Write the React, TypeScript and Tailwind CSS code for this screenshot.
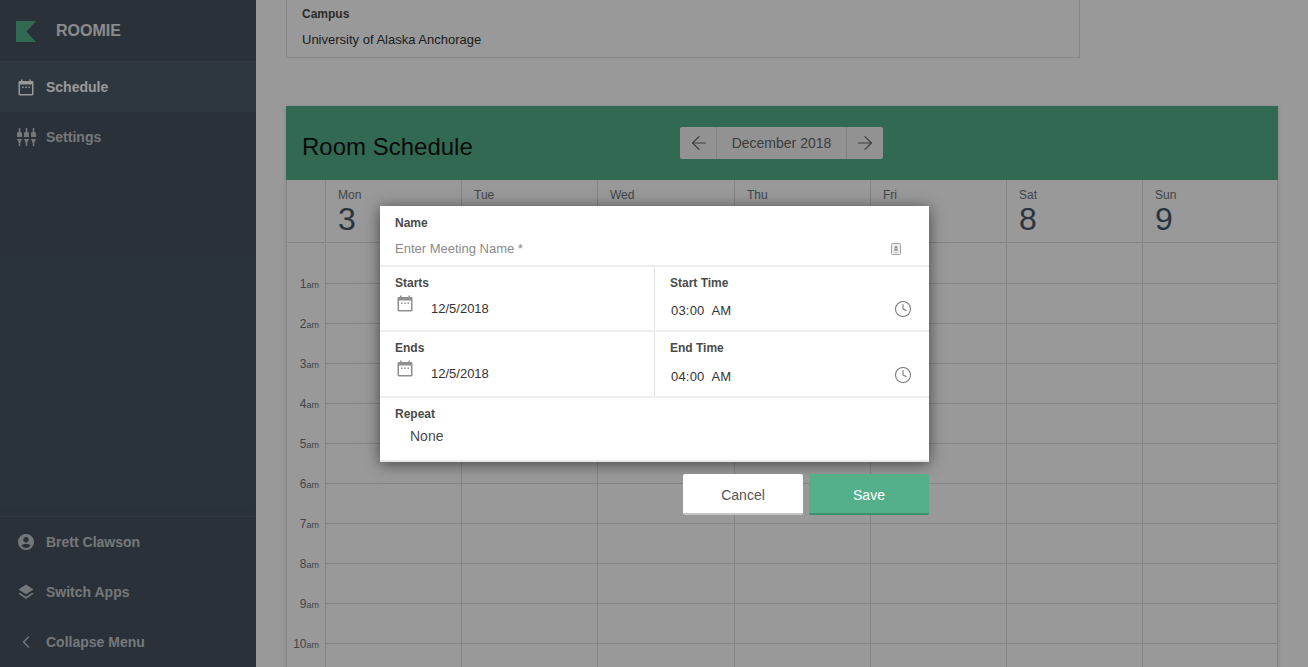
import { ArrowLeft, ArrowRight, ChevronLeft, Clock } from "lucide-react";

const font = { fontFamily: '"Liberation Sans", Arial, sans-serif' };
const days = [
  ["Mon", "3"], ["Tue", "4"], ["Wed", "5"], ["Thu", "6"], ["Fri", "7"], ["Sat", "8"], ["Sun", "9"],
];
const hours = ["1", "2", "3", "4", "5", "6", "7", "8", "9", "10", ""];

function CalIcon({ className }: { className: string }) {
  return (
    <svg viewBox="0 0 16 17" className={className} fill="none">
      <path d="M3 0.5h1.5V2h7V0.5H13V2h1.2c.7 0 1.3.6 1.3 1.3v12c0 .7-.6 1.2-1.3 1.2H1.8c-.7 0-1.3-.5-1.3-1.2v-12C.5 2.6 1.1 2 1.8 2H3z" fill="currentColor" />
      <rect x="2" y="5.5" width="12" height="9.5" fill="var(--cal-bg)" />
      <rect x="4" y="7.5" width="1.6" height="1.4" fill="currentColor" />
      <rect x="7.2" y="7.5" width="1.6" height="1.4" fill="currentColor" />
      <rect x="10.4" y="7.5" width="1.6" height="1.4" fill="currentColor" />
    </svg>
  );
}

function SlidersIcon() {
  return (
    <svg viewBox="0 0 19 18" className="w-[19px] h-[18px]" fill="currentColor">
      {[0, 7, 14].map((x) => (
        <g key={x}>
          <rect x={x + 1.7} y="0" width="1.6" height="5" />
          <path d={`M${x} 5.5c0-.8.6-1.4 1.4-1.4h2.2c.8 0 1.4.6 1.4 1.4V9H${x}z`} />
          <path d={`M${x} 11h5l-1.6 3.5h-1.8z`} />
          <rect x={x + 1.7} y="14" width="1.6" height="4" />
        </g>
      ))}
    </svg>
  );
}

function UserIcon() {
  return (
    <svg viewBox="0 0 16 16" className="w-4 h-4" fill="currentColor">
      <path fillRule="evenodd" d="M8 0a8 8 0 1 1 0 16A8 8 0 0 1 8 0zm0 3a2.7 2.7 0 1 0 0 5.4A2.7 2.7 0 0 0 8 3zm0 6.8c-2 0-3.8.8-4.6 2a5.8 5.8 0 0 0 9.2 0c-.8-1.2-2.6-2-4.6-2z" />
    </svg>
  );
}

function LayersIcon() {
  return (
    <svg viewBox="0 0 16 16" className="w-4 h-4" fill="currentColor">
      <path d="M8 .5l7.5 5L8 10.3.5 5.5z" />
      <path d="M1.8 8.8L8 12.8l6.2-4 1.3.9L8 15 .5 9.7z" />
    </svg>
  );
}

function NavRow({ label, icon, text, bg }: { label: string; icon: React.ReactNode; text: string; bg?: string }) {
  return (
    <div className={`h-[50px] flex items-center ${bg ?? ""}`}>
      <div className={`w-[46px] flex justify-center pl-[6px] ${text}`}>{icon}</div>
      <span className={`text-[14px] font-bold ${text}`}>{label}</span>
    </div>
  );
}

function Field({ label, children, className }: { label: string; children: React.ReactNode; className?: string }) {
  return (
    <div className={`px-[15px] pt-[9px] ${className ?? ""}`}>
      <div className="text-[12px] font-bold leading-[14px] text-[#4a4a4a]">{label}</div>
      {children}
    </div>
  );
}

function DateRow({ label }: { label: string }) {
  return (
    <Field label={label} className="flex-1 border-r border-[#e2e2e2]">
      <div className="flex items-start mt-[-1px]">
        <div className="w-[36px] pt-[6px] pl-[2px]">
          <div className="[--cal-bg:#ffffff] text-[#8f8f8f]">
            <CalIcon className="w-[16px] h-[17px]" />
          </div>
        </div>
        <span className="text-[13px] text-[#333] leading-[15px] pt-[12px]">12/5/2018</span>
      </div>
    </Field>
  );
}

function TimeRow({ label, time, pad }: { label: string; time: string; pad: string }) {
  return (
    <Field label={label} className="w-[274px]">
      <div className={`flex items-center justify-between pr-[2px] ${pad}`}>
        <span className="text-[13px] text-[#333] leading-[15px] pl-[1px] pt-[3px] tracking-[0.2px] whitespace-pre">{time}</span>
        <Clock className="w-[18px] h-[18px] text-[#777]" strokeWidth={1.4} />
      </div>
    </Field>
  );
}

export default function App() {
  return (
    <div style={font} className="relative h-[667px] w-full overflow-hidden bg-white flex">
      <aside className="w-[256px] h-[667px] shrink-0 bg-[#465360] flex flex-col">
        <div className="h-[62px] flex items-center border-b border-[#566370] pl-[16px]">
          <svg viewBox="0 0 20 21" className="w-5 h-[21px] mt-[1px]">
            <path d="M0 0h20l-9.6 10.5L20 21H0z" fill="#54b08a" />
          </svg>
          <span className="ml-[20px] text-[16px] font-bold text-[#e6e8ea]">ROOMIE</span>
        </div>
        <NavRow
          label="Schedule"
          text="text-white"
          bg="bg-[#4e5c6a]"
          icon={<div className="[--cal-bg:#4e5c6a]"><CalIcon className="w-[16px] h-[17px]" /></div>}
        />
        <NavRow label="Settings" text="text-[#c4c8cc]" icon={<SlidersIcon />} />
        <div className="flex-1" />
        <div className="border-t border-[#566370]">
          <NavRow label="Brett Clawson" text="text-[#c4c8cc]" icon={<UserIcon />} />
          <NavRow label="Switch Apps" text="text-[#c4c8cc]" icon={<LayersIcon />} />
          <NavRow label="Collapse Menu" text="text-[#c4c8cc]" icon={<ChevronLeft className="w-5 h-5" strokeWidth={1.6} />} />
        </div>
      </aside>

      <main className="flex-1 pl-[30px] pr-[30px]">
        <div className="w-[794px] h-[58px] border border-t-0 border-[#e0e0e0] pl-[15px] pt-[7px]">
          <div className="text-[12px] font-bold leading-[14px] text-[#4a4a4a]">Campus</div>
          <div className="text-[13px] leading-[15px] mt-[11px] text-[#333]">University of Alaska Anchorage</div>
        </div>

        <section className="mt-[48px] w-[992px] shadow-[0_1px_4px_rgba(0,0,0,0.15)]">
          <header className="h-[74px] bg-[#54b08a] flex pl-[16px]">
            <h1 className="w-[378px] text-[24px] leading-[29px] pt-[26px] text-[#111]">Room Schedule</h1>
            <div className="mt-[21px] h-[32px] w-[203px] flex rounded-[2px] bg-[#f4f4f4] text-[#666]">
              <div className="w-[37px] pl-[2px] flex items-center justify-center border-r border-[#d8d8d8]">
                <ArrowLeft className="w-[22px] h-[22px]" strokeWidth={1.3} />
              </div>
              <div className="flex-1 flex items-center justify-center text-[14px] text-[#666]">December 2018</div>
              <div className="w-[37px] flex items-center justify-center border-l border-[#d8d8d8]">
                <ArrowRight className="w-[22px] h-[22px]" strokeWidth={1.3} />
              </div>
            </div>
          </header>

          <div className="grid grid-cols-[40px_136px_136px_137px_136px_136px_136px_135px] bg-white">
            <div className="h-[63px] border-x border-b border-[#dcdcdc]" />
            {days.map(([d, n]) => (
              <div key={d} className="h-[63px] border-r border-b border-[#dcdcdc] pl-[12px] pt-[8px]">
                <div className="text-[12px] leading-[14px] text-[#6b7480]">{d}</div>
                <div className="text-[32px] leading-[33px] mt-[1px] text-[#46586a]">{n}</div>
              </div>
            ))}
            <div className="col-span-8 h-px" />
            {hours.map((h) => (
              <div key={h} className="contents">
                <div className="h-[40px] border-x border-[#dcdcdc] relative">
                  {h && (
                    <span className="absolute right-[6px] bottom-[-8px] leading-[14px] text-[#6b7480] text-[12px]">
                      {h}
                      <span className="text-[9px]">am</span>
                    </span>
                  )}
                </div>
                {days.map(([d]) => (
                  <div key={d} className="h-[40px] border-r border-b border-[#dcdcdc]" />
                ))}
              </div>
            ))}
          </div>
        </section>
      </main>

      <div className="absolute inset-0 bg-black/40" />

      <div className="absolute left-[380px] top-[206px] w-[549px]">
        <div className="bg-white shadow-[0_2px_14px_rgba(0,0,0,0.55)]">
          <div className="h-[61px] border-b-2 border-[#eeeeee] px-[15px] pt-[10px]">
            <div className="text-[12px] font-bold leading-[14px] text-[#4a4a4a]">Name</div>
            <div className="flex items-center justify-between pr-[13px] mt-[11px]">
              <span className="text-[13px] leading-[15px] text-[#8a8a8a]">Enter Meeting Name *</span>
              <svg viewBox="0 0 10 12" className="w-[10px] h-[12px]" fill="none">
                <rect x="0.5" y="0.5" width="9" height="11" rx="1" stroke="#a0a0a0" fill="#eeeeee" />
                <circle cx="5" cy="4.3" r="1.2" fill="#8a8a8a" />
                <rect x="3.2" y="5.8" width="3.6" height="1.8" fill="#8a8a8a" />
                <rect x="2.5" y="8.8" width="5" height="0.8" fill="#c0c0c0" />
              </svg>
            </div>
          </div>
          <div className="h-[65px] flex border-b-2 border-[#eeeeee]">
            <DateRow label="Starts" />
            <TimeRow label="Start Time" time="03:00  AM" pad="pt-[10px]" />
          </div>
          <div className="h-[66px] flex border-b-2 border-[#eeeeee]">
            <DateRow label="Ends" />
            <TimeRow label="End Time" time="04:00  AM" pad="pt-[11px]" />
          </div>
          <div className="h-[64px] px-[15px] pt-[9px] border-b-2 border-[#e8e8e8]">
            <div className="text-[12px] font-bold leading-[14px] text-[#4a4a4a]">Repeat</div>
            <div className="text-[14px] leading-[16px] mt-[7px] pl-[15px] text-[#4a4a4a]">None</div>
          </div>
        </div>
        <div className="flex justify-end gap-[6px] mt-[12px]">
          <button className="w-[120px] h-[41px] pt-[3px] rounded-[2px] bg-white border-b-2 border-[#c6c6c6] text-[14px] text-[#555]">Cancel</button>
          <button className="w-[120px] h-[41px] pt-[3px] rounded-[2px] bg-[#54b08a] border-b-2 border-[#3d8f6d] text-[14px] text-white">Save</button>
        </div>
      </div>
    </div>
  );
}
